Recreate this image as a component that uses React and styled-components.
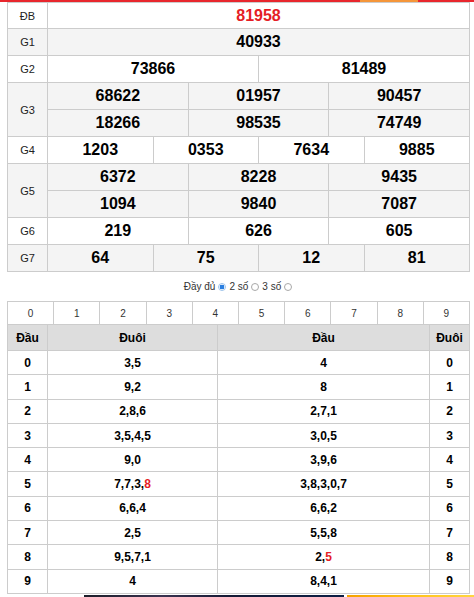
import React from "react";
import styled, { createGlobalStyle } from "styled-components";

const GlobalStyle = createGlobalStyle`
  html, body { margin: 0; padding: 0; background: #fff; }
  body { font-family: "Liberation Sans", Arial, sans-serif; color: #000; }
`;

const TopBar = styled.div`
  display: flex;
  height: 2px;
`;
const BarSeg = styled.div`
  height: 100%;
  background: ${(p) => p.$color};
  ${(p) => (p.$w ? `width: ${p.$w}px;` : "flex: 1;")}
`;

const Page = styled.div`
  padding: 0 4px 0 7px;
`;

const ResultTable = styled.div`
  border-top: 1px solid #ccc;
  border-left: 1px solid #ccc;
`;

const Row = styled.div`
  display: grid;
  grid-template-columns: 40px 1fr;
  background: ${(p) => (p.$alt ? "#f4f4f4" : "#fff")};
`;

const Label = styled.div`
  display: flex;
  align-items: center;
  justify-content: center;
  border-right: 1px solid #ccc;
  border-bottom: 1px solid #ccc;
  font-size: 11px;
  color: #222;
`;

const Values = styled.div`
  display: grid;
  grid-template-columns: repeat(${(p) => p.$cols}, 1fr);
`;

const Cell = styled.div`
  display: flex;
  align-items: center;
  justify-content: center;
  height: ${(p) => p.$h || 26}px;
  border-right: 1px solid #ccc;
  border-bottom: 1px solid #ccc;
  font-size: 16px;
  font-weight: bold;
  color: ${(p) => (p.$red ? "#e51d25" : "#000")};
`;

const RadioLine = styled.div`
  display: flex;
  align-items: center;
  justify-content: center;
  height: 29px;
  font-size: 10px;
  color: #333;
  gap: 2px;
`;

const Radio = styled.span`
  display: inline-block;
  box-sizing: border-box;
  width: 8px;
  height: 8px;
  border-radius: 50%;
  margin: 0 1px;
  border: 1px solid ${(p) => (p.$on ? "#9cc3ea" : "#a8a8a8")};
  background: ${(p) => (p.$on ? "radial-gradient(circle, #2a7fe0 0 2.2px, #fff 2.6px)" : "#fff")};
`;

const LotoTable = styled.div`
  border-top: 1px solid #ccc;
  border-left: 1px solid #ccc;
`;

const DigitRow = styled.div`
  display: grid;
  grid-template-columns: repeat(10, 1fr);
`;

const DigitCell = styled.div`
  display: flex;
  align-items: center;
  justify-content: center;
  height: 22px;
  border-right: 1px solid #ccc;
  border-bottom: 1px solid #ccc;
  font-size: 10px;
  color: #333;
`;

const LotoRow = styled.div`
  display: grid;
  grid-template-columns: 40px 170px 212px 1fr;
  background: ${(p) => (p.$head ? "#dddddd" : "#fff")};
`;

const LotoCell = styled.div`
  display: flex;
  align-items: center;
  justify-content: center;
  height: ${(p) => (p.$head ? "25px" : "23.3px")};
  border-right: 1px solid #ccc;
  border-bottom: 1px solid #ccc;
  font-size: 12px;
  font-weight: bold;
  color: #000;
`;

const Red = styled.span`
  color: #e51d25;
`;

const Banner = styled.div`
  display: flex;
  gap: 3px;
  padding-left: 84px;
  margin-top: 1px;
  height: 20px;
`;
const BannerDark = styled.div`
  width: 260px;
  background: linear-gradient(90deg, #1c1e2a 0%, #3a3350 30%, #151a35 55%, #0c1f45 100%);
`;
const BannerYellow = styled.div`
  flex: 1;
  background: linear-gradient(90deg, #f5a200 0%, #ffc21a 50%, #ffd640 100%);
`;

const prizes = [
  { label: "ĐB", cols: 1, rows: [["81958"]], red: true, h: 25 },
  { label: "G1", cols: 1, rows: [["40933"]] },
  { label: "G2", cols: 2, rows: [["73866", "81489"]] },
  { label: "G3", cols: 3, rows: [["68622", "01957", "90457"], ["18266", "98535", "74749"]] },
  { label: "G4", cols: 4, rows: [["1203", "0353", "7634", "9885"]] },
  { label: "G5", cols: 3, rows: [["6372", "8228", "9435"], ["1094", "9840", "7087"]] },
  { label: "G6", cols: 3, rows: [["219", "626", "605"]] },
  { label: "G7", cols: 4, rows: [["64", "75", "12", "81"]] },
];

const loto = [
  ["0", "3,5", "4", "0"],
  ["1", "9,2", "8", "1"],
  ["2", "2,8,6", "2,7,1", "2"],
  ["3", "3,5,4,5", "3,0,5", "3"],
  ["4", "9,0", "3,9,6", "4"],
  ["5", <>7,7,3,<Red>8</Red></>, "3,8,3,0,7", "5"],
  ["6", "6,6,4", "6,6,2", "6"],
  ["7", "2,5", "5,5,8", "7"],
  ["8", "9,5,7,1", <>2,<Red>5</Red></>, "8"],
  ["9", "4", "8,4,1", "9"],
];

export default function App() {
  return (
    <>
      <GlobalStyle />
      <TopBar>
        <BarSeg $color="#e8262d" $w={360} />
        <BarSeg $color="#f5963a" $w={58} />
        <BarSeg $color="#e8262d" />
      </TopBar>
      <Page>
        <ResultTable>
          {prizes.map((p, i) => (
            <Row key={p.label} $alt={i % 2 === 1}>
              <Label>{p.label}</Label>
              <Values $cols={p.cols}>
                {p.rows.flat().map((v, j) => (
                  <Cell key={j} $red={p.red} $h={p.h}>
                    {v}
                  </Cell>
                ))}
              </Values>
            </Row>
          ))}
        </ResultTable>
        <RadioLine>
          <span>Đầy đủ</span>
          <Radio $on />
          <span>2 số</span>
          <Radio />
          <span>3 số</span>
          <Radio />
        </RadioLine>
        <LotoTable>
          <DigitRow>
            {Array.from({ length: 10 }, (_, i) => (
              <DigitCell key={i}>{i}</DigitCell>
            ))}
          </DigitRow>
          <LotoRow $head>
            <LotoCell $head>Đầu</LotoCell>
            <LotoCell $head>Đuôi</LotoCell>
            <LotoCell $head>Đầu</LotoCell>
            <LotoCell $head>Đuôi</LotoCell>
          </LotoRow>
          {loto.map((r, i) => (
            <LotoRow key={i}>
              {r.map((c, j) => (
                <LotoCell key={j}>{c}</LotoCell>
              ))}
            </LotoRow>
          ))}
        </LotoTable>
      </Page>
      <Banner>
        <BannerDark />
        <BannerYellow />
      </Banner>
    </>
  );
}
